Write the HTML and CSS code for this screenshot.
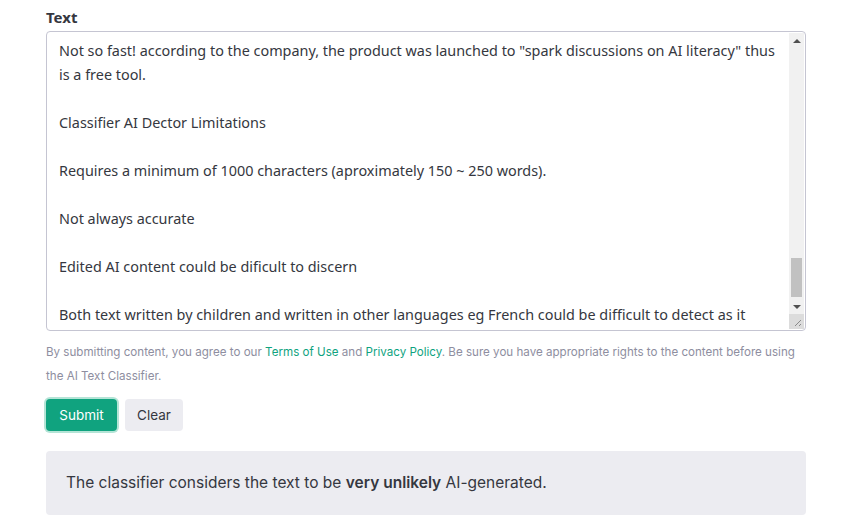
FILE: index.html
```html
<!DOCTYPE html>
<html lang="en">
<head>
<meta charset="utf-8">
<title>AI Text Classifier</title>
<link rel="stylesheet" href="styles.css">
</head>
<body>
<main class="page">
  <label class="field-label">Text</label>
  <div class="textbox">
    <div class="textbox-content">
      <p>Not so fast! according to the company, the product was launched to "spark discussions on AI literacy" thus is a free tool.</p>
      <p>Classifier AI Dector Limitations</p>
      <p>Requires a minimum of 1000 characters (aproximately 150 ~ 250 words).</p>
      <p>Not always accurate</p>
      <p>Edited AI content could be dificult to discern</p>
      <p>Both text written by children and written in other languages eg French could be difficult to detect as it</p>
    </div>
    <div class="scrollbar">
      <div class="sb-btn"><span class="arrow-up"></span></div>
      <div class="sb-track"><div class="sb-thumb"></div></div>
      <div class="sb-btn"><span class="arrow-down"></span></div>
      <div class="sb-corner">
        <svg width="15" height="15" viewBox="0 0 15 15"><path d="M12 6 L6 12 M12 10 L10 12" stroke="#8a8a8a" stroke-width="1" fill="none"/></svg>
      </div>
    </div>
  </div>
  <p class="disclaimer">By submitting content, you agree to our <a href="#">Terms of Use</a> and <a href="#">Privacy Policy</a>. Be sure you have appropriate rights to the content before using the AI Text Classifier.</p>
  <div class="actions">
    <button class="btn btn-primary">Submit</button>
    <button class="btn btn-secondary">Clear</button>
  </div>
  <div class="result"><p class="result-text">The classifier considers the text to be <strong>very unlikely</strong> AI-generated.</p></div>
</main>
</body>
</html>
```
FILE: styles.css
```css
* { box-sizing: border-box; }
html, body { margin: 0; padding: 0; background: #fff; }
.page {
  padding: 7px 46px 0 46px;
  display: flex;
  flex-direction: column;
  font-family: "Noto Sans", sans-serif;
}
.field-label {
  font-family: "Noto Sans", sans-serif;
  font-weight: 700;
  font-size: 15px;
  line-height: 20px;
  color: #353740;
  margin-bottom: 4px;
}
.textbox {
  display: flex;
  height: 300px;
  border: 1px solid #c5c5d2;
  border-radius: 4px;
  overflow: hidden;
}
.textbox-content {
  flex: 1;
  padding: 7px 12px 0 12px;
  overflow: hidden;
  font-family: "Noto Sans", sans-serif;
  font-size: 14.4px;
  line-height: 24px;
  color: #353740;
}
.textbox-content p { margin: 0 0 24px 0; }
.scrollbar {
  width: 15px;
  display: flex;
  flex-direction: column;
  background: #f1f1f1;
  margin: 1px 1px 1px 0;
}
.sb-btn {
  height: 15px;
  display: flex;
  align-items: center;
  justify-content: center;
}
.arrow-up {
  width: 0; height: 0;
  border-left: 4px solid transparent;
  border-right: 4px solid transparent;
  border-bottom: 4px solid #505050;
}
.arrow-down {
  width: 0; height: 0;
  border-left: 4px solid transparent;
  border-right: 4px solid transparent;
  border-top: 4px solid #505050;
}
.sb-track {
  flex: 1;
  display: flex;
  flex-direction: column;
  justify-content: flex-end;
  padding: 0 2px 2px 2px;
}
.sb-thumb {
  height: 39px;
  background: #c1c1c1;
}
.sb-corner {
  height: 15px;
  background: #dcdcdc;
}
.sb-corner svg { display: block; }
.disclaimer {
  margin: 9px 0 0 0;
  font-family: Inter, sans-serif;
  font-size: 11.6px;
  line-height: 24px;
  color: #8e8ea0;
}
.disclaimer a { color: #10a37f; text-decoration: none; }
.actions {
  display: flex;
  gap: 8px;
  margin-top: 11px;
}
.btn {
  height: 32px;
  border: none;
  border-radius: 4px;
  font-family: Inter, sans-serif;
  font-size: 13.5px;
  padding: 0 12px;
  cursor: pointer;
}
.btn-primary {
  width: 71px;
  background: #10a37f;
  color: #fff;
  box-shadow: 0 0 0 2px #b4e4d6;
}
.btn-secondary {
  width: 58px;
  background: #ececf1;
  color: #353740;
}
.result {
  margin-top: 20px;
  height: 64px;
  background: #ececf1;
  border-radius: 4px;
  padding: 20px 20px;
}
.result-text {
  margin: 0;
  font-family: Inter, sans-serif;
  font-size: 15.5px;
  line-height: 24px;
  color: #353740;
}
.result-text strong { font-weight: 600; }
```
